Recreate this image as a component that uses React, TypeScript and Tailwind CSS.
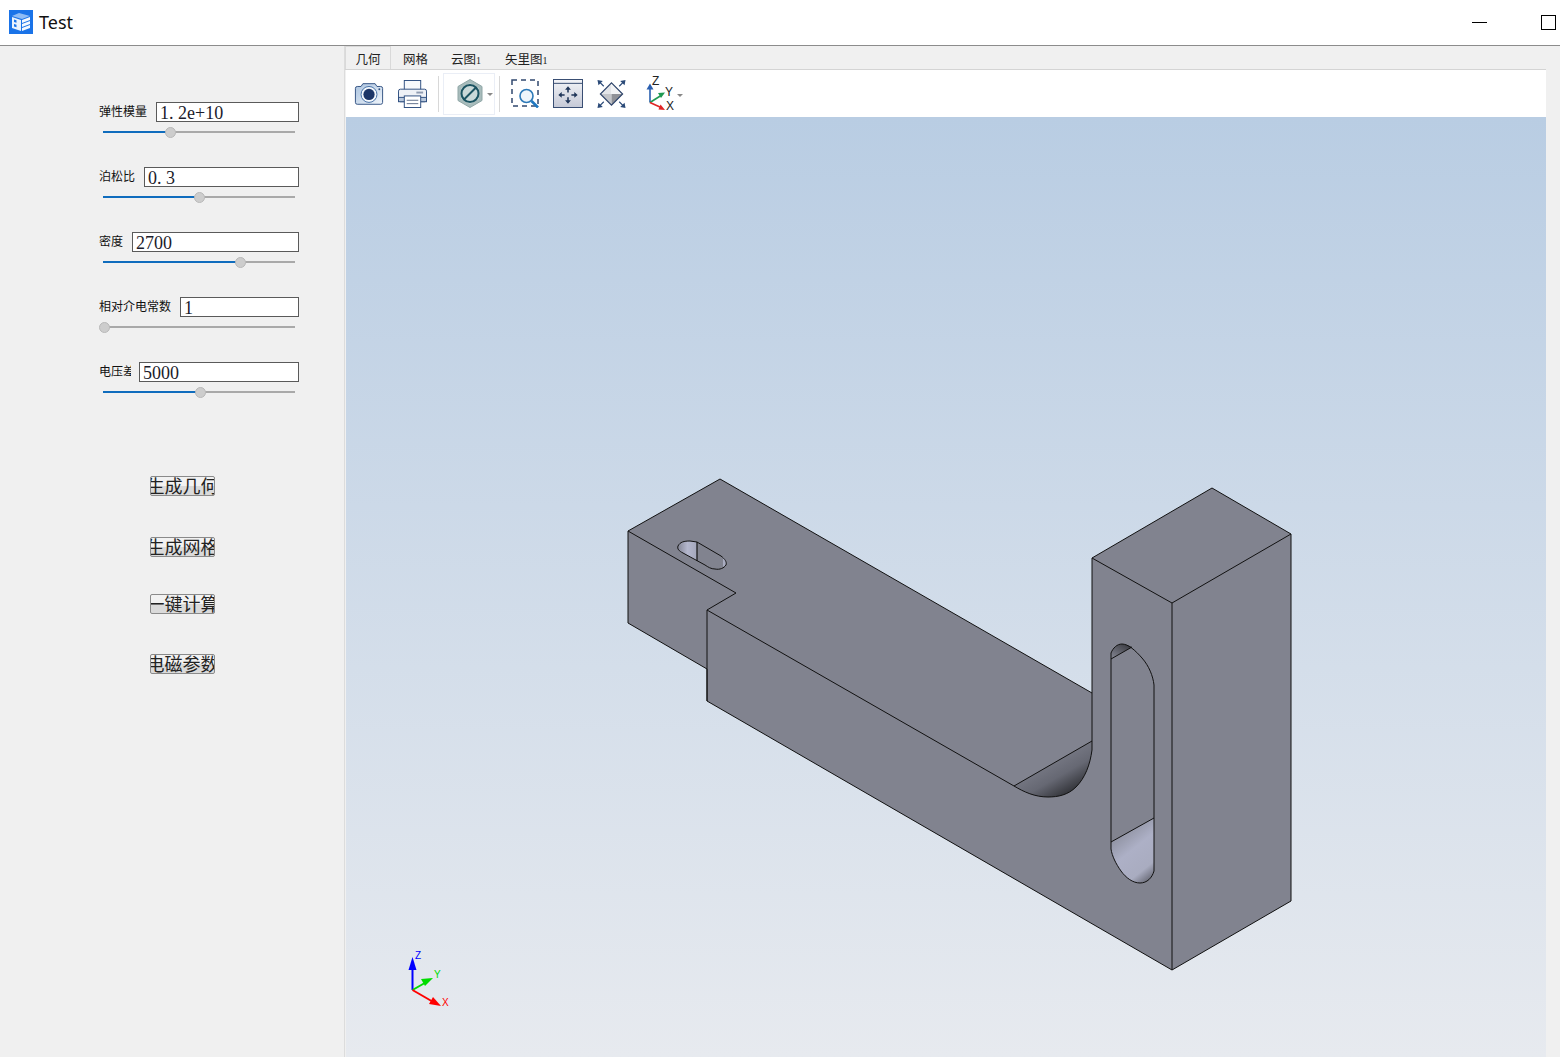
const params = [
  { label: "弹性模量", labelClass: "w-[48px] mr-[9px]", value: "1. 2e+10", pos: 67 },
  { label: "泊松比", labelClass: "w-[36px] mr-[9px]", value: "0. 3", pos: 96 },
  { label: "密度", labelClass: "w-[24px] mr-[9px]", value: "2700", pos: 137 },
  { label: "相对介电常数", labelClass: "w-[72px] mr-[9px]", value: "1", pos: 1 },
  { label: "电压差", labelClass: "w-[32px] mr-[8px]", value: "5000", pos: 97 },
];

const actions = [
  { label: "生成几何", className: "mt-[49px]" },
  { label: "生成网格", className: "mt-[41px]" },
  { label: "一键计算", className: "mt-[37px]" },
  { label: "电磁参数", className: "mt-[40px]" },
];

function Slider({ pos }: { pos: number }) {
  return (
    <div className="relative mt-[9px] ml-[4px] h-[2px] w-[192px] bg-[#a9a9a9]">
      <div className="h-[2px] bg-[#0f6cbd]" style={{ width: pos }} />
      <div
        className="absolute top-[-4px] ml-[-5px] h-[11px] w-[11px] rounded-full border border-[#b9b9b9] bg-[#cdcdcd]"
        style={{ left: pos }}
      />
    </div>
  );
}

function Param({ label, labelClass, value, pos }: (typeof params)[number]) {
  return (
    <div className="h-[65px] w-[200px]">
      <div className="flex h-[20px] items-center">
        <span className={`mb-[2px] overflow-hidden whitespace-nowrap text-[12px] leading-[20px] text-[#111] ${labelClass}`}>{label}</span>
        <input
          readOnly
          value={value}
          className="h-[20px] min-w-0 flex-1 border border-[#5a5a5a] bg-white pl-[3px] pt-[2px] font-['Liberation_Serif',serif] text-[18px] leading-[18px] text-[#1b1b2b] outline-none"
        />
      </div>
      <Slider pos={pos} />
    </div>
  );
}

function Logo() {
  return (
    <svg width="24" height="24" viewBox="0 0 24 24" className="shrink-0">
      <rect width="24" height="24" fill="#1a73e8" />
      <path d="M3 6l7-3 11 3-8 3z" fill="#8fbcf5" />
      <path d="M3 7l9 3v11l-9-3z" fill="#eaf2fd" />
      <path d="M13 10l8-3v3l-8 3zM13 14l8-3v3l-8 3zM13 18l8-3v3l-8 3z" fill="#f6f9fe" />
      <path d="M5 9.5l2.5.8v2.5L5 12zM5 14l2.5.8v2.5L5 16.5z" fill="#1a73e8" />
    </svg>
  );
}

function CameraIcon() {
  return (
    <svg width="30" height="25" viewBox="0 0 32 26">
      <defs>
        <linearGradient id="cam" x1="0" y1="0" x2="1" y2="1">
          <stop offset="0" stopColor="#a9c2de" />
          <stop offset="1" stopColor="#f0f5fb" />
        </linearGradient>
      </defs>
      <path d="M1.5 7.5q0-2 2-2h4l2-3h13l2 3h4q2 0 2 2v15q0 2-2 2h-25q-2 0-2-2z" fill="url(#cam)" stroke="#2f4f80" />
      <circle cx="16" cy="14" r="8.5" fill="#f4f8fc" stroke="#3f6ba3" />
      <circle cx="16" cy="14" r="6" fill="#1c3567" />
      <circle cx="27" cy="8.5" r="1" fill="#2f4f80" />
    </svg>
  );
}

function PrinterIcon() {
  return (
    <svg width="29" height="28" viewBox="0 0 30 29">
      <rect x="6.5" y="0.5" width="17" height="11" fill="#f6f8fb" stroke="#2f4f80" />
      <rect x="0.5" y="9.5" width="29" height="13" rx="2" fill="#eef1f6" stroke="#2f4f80" />
      <rect x="19" y="12" width="7" height="2" fill="#8f9bb0" />
      <rect x="0.5" y="18" width="29" height="4.5" fill="#b9c8dc" stroke="#2f4f80" />
      <rect x="6.5" y="16.5" width="17" height="12" fill="#fff" stroke="#2f4f80" />
      <path d="M9 21h12M9 24.5h12" stroke="#5e6f8a" />
    </svg>
  );
}

function NoneIcon() {
  return (
    <svg width="26" height="29" viewBox="0 0 26 29">
      <path d="M13 .5L25 7.5v14L13 28.5 1 21.5v-14z" fill="#a8bcbc" stroke="#8fa6a6" />
      <path d="M13 4L22 9v11l-9 5-9-5V9z" fill="#bcd0d0" />
      <circle cx="13" cy="14.5" r="8.5" fill="#c9d8d8" stroke="#1b5361" strokeWidth="2" />
      <path d="M7 20.5L19 8.5" stroke="#1b5361" strokeWidth="2" />
    </svg>
  );
}

function ZoomBoxIcon() {
  return (
    <svg width="28" height="29" viewBox="0 0 28 29">
      <rect x="1" y="1" width="26" height="26" fill="none" stroke="#31486f" strokeWidth="1.5" strokeDasharray="5 4" />
      <circle cx="15.5" cy="17" r="6.5" fill="#eef5fb" stroke="#2c79b8" strokeWidth="1.6" />
      <path d="M20.5 22L27 28.5" stroke="#1f77c0" strokeWidth="2.6" />
    </svg>
  );
}

function PanIcon() {
  return (
    <svg width="30" height="29" viewBox="0 0 31 30">
      <defs>
        <linearGradient id="pan" x1="0" y1="0" x2="0" y2="1">
          <stop offset="0" stopColor="#f3f4f8" />
          <stop offset="1" stopColor="#c5c9d6" />
        </linearGradient>
      </defs>
      <rect x="0.5" y="0.5" width="30" height="29" fill="url(#pan)" stroke="#33496f" />
      <path d="M1 4.5h29" stroke="#33496f" />
      <path d="M15.5 10v4M15.5 19v4M8 16.5h4M19 16.5h4" stroke="#1f3558" strokeWidth="1.6" />
      <path d="M15.5 7.5l-3 3.5h6zM15.5 25.5l-3-3.5h6zM5.5 16.5l3.5-3v6zM25.5 16.5l-3.5-3v6z" fill="#1f3558" />
    </svg>
  );
}

function FitIcon() {
  return (
    <svg width="29" height="30" viewBox="0 0 30 30">
      <path d="M15 3.5L3.5 15H15z" fill="#e3e5e9" />
      <path d="M15 3.5L26.5 15H15z" fill="#f2f3f5" />
      <path d="M3.5 15H15v11.5z" fill="#c3c5ca" />
      <path d="M26.5 15H15v11.5z" fill="#8f9197" />
      <path d="M15 3.5L26.5 15 15 26.5 3.5 15z" fill="none" stroke="#2b4168" strokeWidth="1.2" />
      <path d="M2 2l5 5M28 2l-5 5M2 28l5-5M28 28l-5-5" stroke="#2b4a78" strokeWidth="1.2" />
      <path d="M.5 .5l5.500 1-4.500 4.500zM29.500 .5l-5.500 1 4.500 4.500zM.5 29.500l5.500-1-4.500-4.500zM29.500 29.500l-5.500-1 4.500-4.500z" fill="#2b4a78" />
    </svg>
  );
}

function TriadIcon() {
  return (
    <svg width="40" height="40" viewBox="0 0 40 40" className="font-['Liberation_Sans',sans-serif]">
      <path d="M5 28.500V14" stroke="#2a5fb0" strokeWidth="1.6" />
      <path d="M5 9.500l-3.500 6h7z" fill="#2a5fb0" />
      <path d="M5 28.500l11-7" stroke="#1f9a52" strokeWidth="1.6" />
      <path d="M20 18.500l-7 .5 3 5z" fill="#1f9a52" />
      <path d="M5 28.500l11 5" stroke="#e02424" strokeWidth="1.6" />
      <path d="M20 36l-6.500-.5 2-5z" fill="#e02424" />
      <text x="7" y="11" fontSize="12" fill="#222">Z</text>
      <text x="20" y="22" fontSize="12" fill="#222">Y</text>
      <text x="21" y="36" fontSize="12" fill="#222">X</text>
      <path d="M32 20h6l-3 3z" fill="#888" />
    </svg>
  );
}

function Model() {
  return (
    <svg viewBox="346 117 1200 940" className="absolute inset-0 h-full w-full">
      <defs>
        <linearGradient id="fillet" gradientUnits="userSpaceOnUse" x1="1045" y1="750" x2="1072" y2="797">
          <stop offset="0" stopColor="#81838f" />
          <stop offset="0.55" stopColor="#666873" />
          <stop offset="1" stopColor="#26272b" />
        </linearGradient>
        <linearGradient id="slotBottom" gradientUnits="userSpaceOnUse" x1="1115" y1="835" x2="1155" y2="885">
          <stop offset="0" stopColor="#8d909f" />
          <stop offset="0.35" stopColor="#adb0c6" />
          <stop offset="0.7" stopColor="#a9acc0" />
          <stop offset="1" stopColor="#45464e" />
        </linearGradient>
        <linearGradient id="slotTop" gradientUnits="userSpaceOnUse" x1="1116" y1="660" x2="1126" y2="644">
          <stop offset="0" stopColor="#81838f" />
          <stop offset="1" stopColor="#3d3e45" />
        </linearGradient>
        <linearGradient id="hole" gradientUnits="userSpaceOnUse" x1="678" y1="550" x2="697" y2="550">
          <stop offset="0" stopColor="#858796" />
          <stop offset="0.5" stopColor="#b4b7cd" />
          <stop offset="1" stopColor="#a3a6bb" />
        </linearGradient>
      </defs>

      <path
        d="M628 531L720 479L1092 693V558L1212 488L1291 534V901L1172 970L707 701V669L628 623Z"
        fill="#81838f"
        stroke="#111"
        strokeLinejoin="round"
      />

      {/* fillet */}
      <path d="M1014 786L1092 741V750C1090 765 1085 778 1076 787C1068 795 1058 797 1048 797C1035 797 1024 792 1014 786Z" fill="url(#fillet)" />
      <path d="M1014 786L1092 741M1092 741V750C1090 765 1085 778 1076 787C1068 795 1058 797 1048 797C1035 797 1024 792 1014 786" fill="none" stroke="#111" />

      {/* edges */}
      <path d="M628 531L736 593L707 610V701M707 610L1014 786M1092 693V741M1092 558L1172 603L1291 534M1172 603V970" fill="none" stroke="#111" />

      {/* long slot */}
      <path d="M1111 659L1132 647C1128 645 1125 644 1122 644C1117 644 1113 648 1111 653Z" fill="url(#slotTop)" />
      <path d="M1111 842L1154 818V871C1152 878 1147 883 1140 883C1133 883 1126 878 1121 871C1116 864 1112 856 1111 849Z" fill="url(#slotBottom)" />
      <path
        d="M1111 849V653C1113 648 1117 644 1122 644C1128 644 1135 650 1142 658C1149 666 1153 676 1154 685V871C1152 878 1147 883 1140 883C1133 883 1126 878 1121 871C1116 864 1112 856 1111 849Z"
        fill="none"
        stroke="#111"
      />
      <path d="M1111 659L1132 647M1111 842L1154 818" fill="none" stroke="#111" />

      {/* small slot */}
      <path d="M697 542V561L683 553C679 551 677 549 678 546C680 542 684 541 690 541Z" fill="url(#hole)" />
      <path d="M723 557C726 560 727 563 726 565L723 567Z" fill="#a9acc0" />
      <path
        d="M697 542L721 556C725 559 727 562 726 565C724 568 720 570 715 569C711 569 708 567 705 565L683 553C679 551 677 549 678 546C680 542 684 541 690 541Z"
        fill="none"
        stroke="#111"
      />
      <path d="M697 542V561" fill="none" stroke="#111" strokeWidth="1.2" />

      {/* corner triad */}
      <g className="font-['Liberation_Sans',sans-serif]">
        <path d="M412.500 990V966" stroke="#0000ff" strokeWidth="2" />
        <path d="M412.500 957l-4 13h8z" fill="#0000ff" />
        <path d="M412.500 990l14-8" stroke="#00dc00" strokeWidth="2" />
        <path d="M433 978l-12 1 4 7z" fill="#00dc00" />
        <path d="M412.500 990l19 11" stroke="#ff0000" strokeWidth="2" />
        <path d="M441 1006l-8-9-4 7z" fill="#ff0000" />
        <text x="415" y="959" fontSize="10" fill="#0000ff">Z</text>
        <text x="434" y="978" fontSize="10" fill="#00dc00">Y</text>
        <text x="442" y="1006" fontSize="10" fill="#ff0000">X</text>
      </g>
    </svg>
  );
}

function TabDigit() {
  return <span className="font-['Liberation_Serif',serif] text-[10px]">1</span>;
}

export default function App() {
  return (
    <div className="flex h-[1057px] w-[1560px] flex-col overflow-hidden bg-[#f0f0f0] font-['Noto_Sans_CJK_SC','Noto_Sans',sans-serif]">
      <header className="flex h-[46px] shrink-0 items-center border-b border-[#8c8c8c] bg-white pb-[1px] pl-[9px]">
        <Logo />
        <span className="ml-[6px] font-['Noto_Sans',sans-serif] text-[18px] text-[#111]">Test</span>
        <div className="ml-auto mr-[54px] h-px w-[15px] bg-black" />
        <div className="mr-[4px] h-[15px] w-[15px] border border-black" />
      </header>

      <main className="flex min-h-0 flex-1">
        <aside className="w-[345px] shrink-0 border-r border-[#dcdcdc] pl-[99px] pt-[56px]">
          {params.map((p) => (
            <Param key={p.label} {...p} />
          ))}
          <div className="flex flex-col pl-[51px]">
            {actions.map((a) => (
              <button
                key={a.label}
                className={`flex h-[20px] w-[65px] items-center justify-center overflow-hidden whitespace-nowrap rounded-[2px] border border-[#8a8a8a] bg-[linear-gradient(#f2f2f2_50%,#dadada_50%)] pb-[2px] text-[18px] leading-[18px] text-[#222] ${a.className}`}
              >
                {a.label}
              </button>
            ))}
          </div>
        </aside>

        <section className="mr-[14px] flex min-w-0 flex-1 flex-col">
          <nav className="flex h-[24px] shrink-0 items-end border-b border-[#d4d4d4] text-[12.5px] text-[#222]">
            <div className="flex h-[23px] w-[46px] items-center justify-center border-x border-t border-[#d9d9d9] pt-[2px]">几何</div>
            <span className="ml-[12px] h-[22px] leading-[24px]">网格</span>
            <span className="ml-[23px] h-[22px] leading-[24px]">云图<TabDigit /></span>
            <span className="ml-[24px] h-[22px] leading-[24px]">矢里图<TabDigit /></span>
          </nav>

          <div className="ml-[1px] flex h-[47px] shrink-0 items-center bg-white pl-[8px]">
            <CameraIcon />
            <div className="ml-[14px]"><PrinterIcon /></div>
            <div className="ml-[11px] h-[36px] w-px bg-[#d8d8d8]" />
            <div className="ml-[4px] flex h-[42px] w-[52px] items-center border border-[#eaeef6] pl-[13px]">
              <NoneIcon />
              <div className="ml-[4px] mt-[2px] h-0 w-0 border-x-[3px] border-t-[3px] border-x-transparent border-t-[#888]" />
            </div>
            <div className="ml-[4px] h-[36px] w-px bg-[#d8d8d8]" />
            <div className="ml-[11px]"><ZoomBoxIcon /></div>
            <div className="ml-[14px]"><PanIcon /></div>
            <div className="ml-[14px]"><FitIcon /></div>
            <div className="ml-[19px]"><TriadIcon /></div>
          </div>

          <div className="relative ml-[1px] min-h-0 flex-1 bg-[linear-gradient(#b9cde3,#e7eaef)]">
            <Model />
          </div>
        </section>
      </main>
    </div>
  );
}
